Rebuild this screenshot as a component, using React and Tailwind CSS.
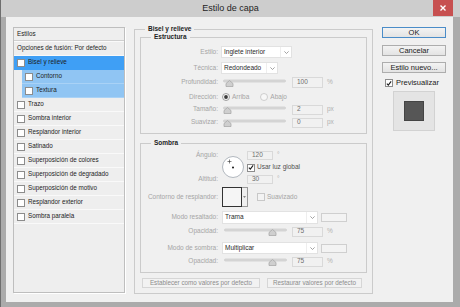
// App.jsx — "Estilo de capa" layer style dialog (Photoshop-like)
import React from 'react';

const STYLE_ROWS = [
  'Trazo', 'Sombra interior', 'Resplandor interior', 'Satinado',
  'Superposición de colores', 'Superposición de degradado',
  'Superposición de motivo', 'Resplandor exterior', 'Sombra paralela',
];

const Check = ({ checked = false, dim = false, className = '' }) => (
  <span className={`flex-shrink-0 w-[8px] h-[8px] flex items-center justify-center border ${dim ? 'border-[#c8c8c8] bg-[#f3f3f3]' : 'border-[#8c8c8c] bg-white'} ${className}`}>
    {checked && (
      <svg width="7" height="7" viewBox="0 0 7 7" className="block">
        <path d="M1 3.6 L2.7 5.4 L6 1.1" fill="none" stroke="#1e1e1e" strokeWidth="1.3" />
      </svg>
    )}
  </span>
);

const Chevron = () => (
  <svg width="5" height="3" viewBox="0 0 5 3" className="block">
    <path d="M0.4 0.4 L2.5 2.5 L4.6 0.4" fill="none" stroke="#8c8c8c" strokeWidth="0.8" />
  </svg>
);

const Select = ({ text, className = '' }) => (
  <div className={`flex items-stretch bg-white border border-[#e2e2e2] ${className}`}>
    <span className="flex-1 flex items-center pl-[2px] text-[#2a2a2a] whitespace-nowrap overflow-hidden">{text}</span>
    <span className="w-[11px] flex items-center justify-center border-l border-[#eeeeee]"><Chevron /></span>
  </div>
);

const Num = ({ value, className = 'w-[31px] h-[11px]' }) => (
  <span className={`flex items-center pl-[4px] bg-[#f1f1f1] border border-[#d9d9d9] text-[#6e6e6e] ${className}`}>{value}</span>
);

const Slider = ({ pos }) => (
  <svg width="64" height="11" viewBox="0 0 64 11" className="block">
    <rect x="0.5" y="3" width="62" height="2" rx="1" fill="#dcdcdc" stroke="#c2c2c2" strokeWidth="0.6" />
    <path d={`M${pos} 6.5 L${pos + 3.5} 3.5 L${pos + 7} 6.5 V9.5 H${pos} Z`} fill="#cfcfcf" stroke="#a2a2a2" strokeWidth="0.7" />
  </svg>
);

const Radio = ({ on }) => (
  <svg width="8" height="8" viewBox="0 0 8 8" className="block">
    <circle cx="4" cy="4" r="3.5" fill="#f7f7f7" stroke={on ? '#8a8a8a' : '#c4c4c4'} strokeWidth="0.8" />
    {on && <circle cx="4" cy="4" r="1.9" fill="#3a3a3a" />}
  </svg>
);

const Label = ({ children }) => (
  <span className="w-[80px] flex-shrink-0 pr-[3px] text-right text-[#a5a5a5] whitespace-nowrap">{children}</span>
);

const Unit = ({ children }) => <span className="ml-[4px] text-[#b0b0b0]">{children}</span>;

const Btn = ({ children, primary = false, className = '' }) => (
  <div className={`h-[11px] flex items-center justify-center border ${primary ? 'border-[#4a8cc8]' : 'border-[#adadad]'} bg-linear-to-b from-[#f3f3f3] to-[#e3e3e3] text-[7.5px] text-[#1a1a1a] ${className}`}>
    {children}
  </div>
);

const ListRow = ({ label, sub = false, selected = false, className = '' }) => (
  <div className={`h-[14px] flex-shrink-0 flex items-center gap-[3px] border-b ${sub ? 'ml-[8px] pl-[3px] bg-[#90c5f3] border-[#a9d2f6]' : 'pl-[3px]'} ${selected ? 'bg-[#3f9ff5] border-[#3f9ff5]' : sub ? '' : 'border-[#f9f9f9]'} ${className}`}>
    <Check />
    <span className="whitespace-nowrap">{label}</span>
  </div>
);

export default function App() {
  return (
    <div className="w-[460px] h-[307px] bg-[#ababab] border-l border-[#6e6e6e] flex flex-col font-['Liberation_Sans',Arial,sans-serif] leading-none select-none">
      {/* Title bar */}
      <div className="h-[17px] flex-shrink-0 bg-[#cdcdcd] grid grid-cols-[1fr_auto_1fr]">
        <div />
        <div className="text-[9px] leading-[17px] text-[#1e1e1e]">Estilo de capa</div>
        <div className="flex justify-end">
          <div className="w-[20px] h-[16px] mr-[7px] bg-[#c75050] flex items-center justify-center">
            <svg width="6" height="6" viewBox="0 0 6 6" className="block">
              <path d="M0.5 0.5 L5.5 5.5 M5.5 0.5 L0.5 5.5" stroke="#ffffff" strokeWidth="1.4" />
            </svg>
          </div>
        </div>
      </div>

      {/* Body */}
      <div className="h-[285px] ml-[5px] mr-[7px] bg-[#f0f0f0] flex items-start pl-[7px] pt-[8px]">
        {/* Styles list */}
        <div className="w-[112px] h-[266px] mt-[2px] flex-shrink-0 border border-[#bebebe] bg-[#eeeeee] shadow-[1px_1px_0_#ffffff] flex flex-col text-[6.3px] text-[#1c1c1c]">
          <div className="h-[13px] flex-shrink-0 flex items-center pl-[3px] border-b border-[#cfcfcf] shadow-[0_1px_0_#fafafa]">Estilos</div>
          <div className="h-[15px] flex-shrink-0 flex items-center pl-[3px] border-b border-[#f9f9f9]">Opciones de fusión: Por defecto</div>
          <ListRow label="Bisel y relieve" selected />
          <ListRow label="Contorno" sub />
          <ListRow label="Textura" sub className="h-[13px]" />
          {STYLE_ROWS.map(r => <ListRow key={r} label={r} />)}
        </div>

        {/* Bisel y relieve */}
        <fieldset className="w-[239px] ml-[9px] flex-shrink-0 px-[5px] pb-[5px] border border-[#cbcbcb] text-[6.5px]">
          <legend className="ml-[5px] px-[3px] leading-[8px] font-bold text-[#1e1e1e]">Bisel y relieve</legend>

          <fieldset className="border border-[#cbcbcb] pb-[5px]">
            <legend className="ml-[10px] px-[3px] leading-[8px] font-bold text-[#1e1e1e]">Estructura</legend>
            <div className="mt-[5px] h-[12px] flex items-center">
              <Label>Estilo:</Label>
              <Select text="Inglete interior" className="w-[71px] h-[12px]" />
            </div>
            <div className="mt-[4px] h-[12px] flex items-center">
              <Label>Técnica:</Label>
              <Select text="Redondeado" className="w-[57px] h-[12px]" />
            </div>
            <div className="mt-[3px] h-[11px] flex items-center">
              <Label>Profundidad:</Label>
              <span className="ml-[2px]"><Slider pos={3} /></span>
              <Num value="100" className="ml-[5px] w-[31px] h-[11px]" />
              <Unit>%</Unit>
            </div>
            <div className="mt-[4px] h-[10px] flex items-center">
              <Label>Dirección:</Label>
              <span className="ml-[1px]"><Radio on /></span>
              <span className="ml-[2px] text-[#a5a5a5]">Arriba</span>
              <span className="ml-[11px]"><Radio /></span>
              <span className="ml-[2px] text-[#a5a5a5]">Abajo</span>
            </div>
            <div className="mt-[2px] h-[11px] flex items-center">
              <Label>Tamaño:</Label>
              <span className="ml-[2px]"><Slider pos={1} /></span>
              <Num value="2" className="ml-[5px] w-[31px] h-[10px]" />
              <Unit>px</Unit>
            </div>
            <div className="mt-[2px] h-[11px] flex items-center">
              <Label>Suavizar:</Label>
              <span className="ml-[2px]"><Slider pos={1} /></span>
              <Num value="0" className="ml-[5px] w-[31px] h-[10px]" />
              <Unit>px</Unit>
            </div>
          </fieldset>

          <fieldset className="mt-[5px] border border-[#cbcbcb] pb-[5px]">
            <legend className="ml-[10px] px-[3px] leading-[8px] font-bold text-[#1e1e1e]">Sombra</legend>
            <div className="mt-[4px] h-[33px] flex">
              <div className="w-[80px] pr-[3px] flex flex-col justify-between items-end text-[#a5a5a5]">
                <span className="h-[9px] flex items-center">Ángulo:</span>
                <span className="h-[9px] flex items-center">Altitud:</span>
              </div>
              <div className="ml-[1px] mt-[5px]">
                <svg width="22" height="22" viewBox="0 0 22 22" className="block">
                  <circle cx="11" cy="11" r="10.5" fill="#ffffff" stroke="#a9b0b8" strokeWidth="0.9" />
                  <circle cx="11" cy="11.5" r="1" fill="#111111" />
                  <path d="M7.5 3.5 V7.5 M5.5 5.5 H9.5" stroke="#333333" strokeWidth="0.6" />
                </svg>
              </div>
              <div className="ml-[3px] flex flex-col justify-between">
                <div className="flex items-center">
                  <Num value="120" className="w-[26px] h-[9px]" />
                  <Unit>°</Unit>
                </div>
                <div className="flex items-center gap-[2px]">
                  <Check checked />
                  <span className="text-[#505050]">Usar luz global</span>
                </div>
                <div className="flex items-center">
                  <Num value="30" className="w-[26px] h-[9px]" />
                  <Unit>°</Unit>
                </div>
              </div>
            </div>
            <div className="mt-[3px] h-[20px] flex items-center">
              <Label>Contorno de resplandor:</Label>
              <div className="ml-[1px] h-[20px] flex">
                <div className="w-[20px] h-[20px] border border-[#333333] bg-[#f5f5f5]" />
                <div className="w-[6px] h-[20px] border-y border-r border-[#9a9a9a] bg-[#f0f0f0] flex items-center justify-center">
                  <svg width="3" height="2" viewBox="0 0 3 2" className="block"><path d="M0 0 H3 L1.5 2 Z" fill="#8a8a8a" /></svg>
                </div>
              </div>
              <Check dim className="ml-[9px]" />
              <span className="ml-[2px] text-[#a5a5a5]">Suavizado</span>
            </div>
            <div className="mt-[4px] h-[13px] flex items-center">
              <Label>Modo resaltado:</Label>
              <Select text="Trama" className="ml-[1px] w-[96px] h-[13px]" />
              <span className="ml-[3px] w-[26px] h-[9px] bg-[#f3f3f3] border border-[#cfcfcf]" />
            </div>
            <div className="mt-[2px] h-[11px] flex items-center">
              <Label>Opacidad:</Label>
              <span className="ml-[3px]"><Slider pos={45} /></span>
              <Num value="75" className="ml-[4px] w-[31px] h-[10px]" />
              <Unit>%</Unit>
            </div>
            <div className="mt-[5px] h-[12px] flex items-center">
              <Label>Modo de sombra:</Label>
              <Select text="Multiplicar" className="ml-[1px] w-[96px] h-[12px]" />
              <span className="ml-[3px] w-[26px] h-[9px] bg-[#f3f3f3] border border-[#cfcfcf]" />
            </div>
            <div className="mt-[2px] h-[11px] flex items-center">
              <Label>Opacidad:</Label>
              <span className="ml-[3px]"><Slider pos={45} /></span>
              <Num value="75" className="ml-[4px] w-[31px] h-[10px]" />
              <Unit>%</Unit>
            </div>
          </fieldset>

          <div className="mt-[5px] h-[10px] flex gap-[7px] pl-[2px] text-[6.3px] text-[#8c8c8c]">
            <div className="w-[118px] h-[10px] flex items-center justify-center bg-[#f2f2f2] border border-[#d6d6d6]">Establecer como valores por defecto</div>
            <div className="w-[95px] h-[10px] flex items-center justify-center bg-[#f2f2f2] border border-[#d6d6d6]">Restaurar valores por defecto</div>
          </div>
        </fieldset>

        {/* Buttons column */}
        <div className="w-[64px] ml-[9px] mt-[2px] flex-shrink-0 flex flex-col">
          <Btn primary>OK</Btn>
          <Btn className="mt-[7px]">Cancelar</Btn>
          <Btn className="mt-[6px]">Estilo nuevo...</Btn>
          <div className="mt-[5px] h-[10px] flex items-center gap-[3px] pl-[3px] text-[7.5px] text-[#1a1a1a]">
            <Check checked />
            <span>Previsualizar</span>
          </div>
          <div className="mt-[3px] mx-auto w-[42px] h-[40px] bg-[#e4e4e4] border border-[#d2d2d2] flex items-center justify-center">
            <div className="w-[20px] h-[20px] bg-[#565656] border border-[#444444]" />
          </div>
        </div>
      </div>
    </div>
  );
}
